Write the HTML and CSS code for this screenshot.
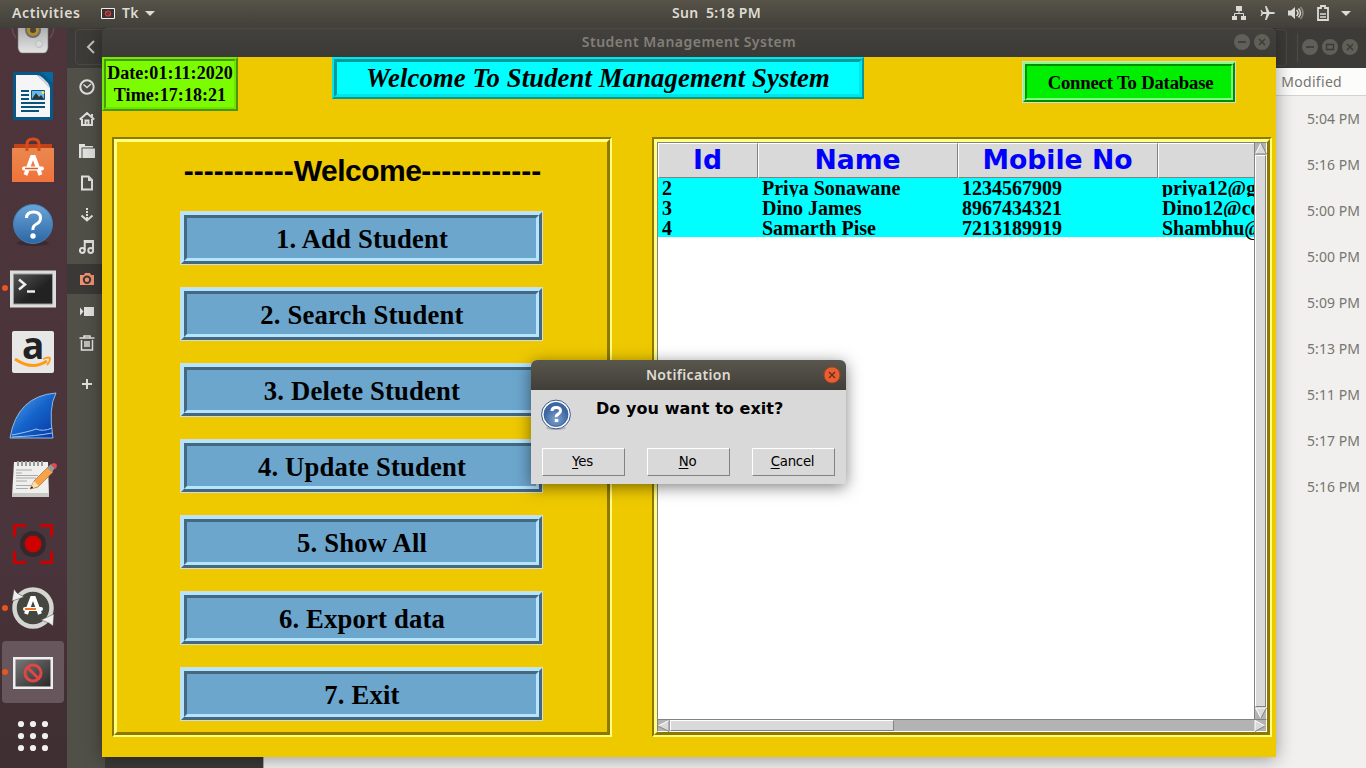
FILE: index.html
```html
<!DOCTYPE html>
<html lang="en">
<head>
<meta charset="utf-8">
<title>Student Management System</title>
<link rel="stylesheet" href="styles.css">
</head>
<body>
<div class="desktop">

  <section class="files">
    <header class="files-bar">
      <div class="back"><svg width="32" height="36" viewBox="0 0 32 36"><path d="M18 11l-6 6 6 6" fill="none" stroke="#c4c2bd" stroke-width="2"/></svg></div>
      <div class="files-right">
        <i class="sep"></i>
        <svg width="60" height="20" viewBox="0 0 60 20"><g fill="#605f58"><circle cx="10" cy="10" r="8"/><circle cx="30" cy="10" r="8"/><circle cx="50" cy="10" r="8"/></g><g fill="none" stroke="#3a3934" stroke-width="1.3"><path d="M6 10h8M26.500 7.500h7v5h-7zM47 7l6 6m0-6l-6 6"/></g></svg>
      </div>
    </header>
    <div class="files-body">
      <nav class="places">
        <div class="place"><svg viewBox="0 0 16 16"><circle cx="8" cy="8" r="6.700"/><path d="M4.500 5.500L8 8.500l4-3.500" stroke-width="1.400"/></svg></div>
        <div class="place"><svg viewBox="0 0 16 16"><path d="M.8 8.500L8 2l7.200 6.500M3 8v6h10V8M6.500 14V9.500h3V14M13 6V3"/></svg></div>
        <div class="place"><svg viewBox="0 0 16 16"><path d="M0 1h6v2h8v1.500H2.500V15H0z" fill="#e0e0de" stroke="none"/><path d="M3.500 5.500H16V15H3.500z" fill="#e0e0de" stroke="none"/></svg></div>
        <div class="place"><svg viewBox="0 0 16 16"><path d="M3 1.500h6.500L13 5v9.500H3z"/><path d="M9 1v5h4z" fill="#e0e0de" stroke="none"/></svg></div>
        <div class="place"><svg viewBox="0 0 16 16"><path d="M8 1v11" stroke-dasharray="2 1"/><path d="M2.500 8.500L8 13.500l5.500-5"/></svg></div>
        <div class="place"><svg viewBox="0 0 16 16"><circle cx="3.300" cy="11.500" r="2.400"/><circle cx="11.700" cy="11.500" r="2.400"/><path d="M5.700 11V2H14v9M6 3h8"/></svg></div>
        <div class="place active"><svg viewBox="0 0 16 16"><path d="M1 4h4l1-2h5l1 2h3v10H1z" fill="#f0906e" stroke="none"/><circle cx="8" cy="8.800" r="3.200" stroke="#3a3935"/></svg></div>
        <div class="place"><svg viewBox="0 0 16 16"><path d="M5 4h10v9H5zM1 4.500l3.500 4L1 12.500z" fill="#e0e0de" stroke="none"/></svg></div>
        <div class="place"><svg viewBox="0 0 16 16"><path d="M.5 3h15M5 2.500V1h6v1.500M2.500 5v10h11V5M6 6v6M8 6v6M10 6v6" stroke-width="1.500"/></svg></div>
        <div class="place add"><svg viewBox="0 0 16 16"><path d="M8 3v10M3 8h10"/></svg></div>
      </nav>
      <div class="tree-pane"></div>
      <div class="listing">
        <div class="list-head">Modified</div>
        <div class="stamp">5:04 PM</div><div class="stamp">5:16 PM</div><div class="stamp">5:00 PM</div>
        <div class="stamp">5:00 PM</div><div class="stamp">5:09 PM</div><div class="stamp">5:13 PM</div>
        <div class="stamp">5:11 PM</div><div class="stamp">5:17 PM</div><div class="stamp">5:16 PM</div>
      </div>
    </div>
  </section>

  <aside class="dock">
    <div class="app speaker"><svg width="66" height="30" viewBox="0 0 66 30"><defs><linearGradient id="sp" x2="0" y2="1"><stop stop-color="#aaa"/><stop offset="1" stop-color="#e4e4e4"/></linearGradient></defs><path d="M12 -2q0 7 4 12M54 -2q0 7-4 12" fill="none" stroke="#5e4c58" stroke-width="1.500"/><path d="M18 -2v22q1 5 4 5h22q3 0 4-5V-2z" fill="url(#sp)" stroke="#777" stroke-width=".6"/><circle cx="33" cy="2" r="8" fill="#6c6c6c"/><circle cx="33" cy="2" r="6" fill="#b28b2d"/><circle cx="33" cy="2" r="3" fill="#4a4437"/><circle cx="39" cy="16" r="3.500" fill="#d8d8d8" stroke="#bbb"/></svg></div>
    <div class="app"><svg viewBox="0 0 48 48"><path d="M6 0h27l11 11v35q0 2-2 2H6q-2 0-2-2V2q0-2 2-2z" fill="#075789"/><path d="M32 0h11q1 0 1 1v10z" fill="#0369a3"/><path d="M7 3h21l13 13v29H7z" fill="#f5f5f5"/><path d="M28 3q3 0 6 3l5 5q2 3 2 6z" fill="#d2d6dd"/><path d="M12 19h8M12 23h8M12 27h8M12 31h24M12 35h24M12 39h18" stroke="#0a527e" stroke-width="2"/><path d="M22.500 18.500h13v9h-13z" fill="#68b8e8" stroke="#075789"/><path d="M23 27l4-6 3 4 2-2 3 4z" fill="#333"/><circle cx="34" cy="20.500" r="1.500" fill="#fd5"/></svg></div>
    <div class="app"><svg viewBox="0 0 48 48"><defs><linearGradient id="bag" x2="0" y2="1"><stop stop-color="#e9884f"/><stop offset="1" stop-color="#f0733b"/></linearGradient></defs><path d="M5 8h38v8H5z" fill="#bf4317"/><path d="M3 12h42v34H3z" fill="url(#bag)"/><path d="M18 15V8q0-5 6-5t6 5v7" fill="none" stroke="#d94c1a" stroke-width="3"/><path d="M16.500 39L23 21h2l6.500 18" fill="none" stroke="#fff" stroke-width="4"/><path d="M15 32.500h18" stroke="#fff" stroke-width="4" stroke-linecap="round"/><path d="M16 32.500h13" stroke="#e65d20" stroke-width="1.500"/></svg></div>
    <div class="app"><svg viewBox="0 0 48 48"><defs><linearGradient id="hp" x2="0" y2="1"><stop stop-color="#69a5d8"/><stop offset="1" stop-color="#2c66a6"/></linearGradient></defs><ellipse cx="24" cy="43" rx="16" ry="3" fill="#3c2a30"/><circle cx="24" cy="24" r="19.500" fill="url(#hp)" stroke="#437fb7"/><path d="M17.500 18q0-6 7-6t7 6q0 4-4 6t-3.500 6" fill="none" stroke="#fff" stroke-width="3"/><circle cx="24" cy="36" r="2.700" fill="#fff"/></svg></div>
    <div class="app running"><svg viewBox="0 0 48 48"><defs><linearGradient id="tm" x2="1" y2="1"><stop stop-color="#555"/><stop offset=".6" stop-color="#222"/></linearGradient></defs><path d="M1 6.500h46v37H1z" fill="#ddd"/><path d="M4.500 10h39v30h-39z" fill="url(#tm)" stroke="#999"/><path d="M10 15.500l6 5-6 5" fill="none" stroke="#eee" stroke-width="2.500"/><path d="M18 27.500h8" stroke="#eee" stroke-width="2.500"/></svg></div>
    <div class="app"><svg viewBox="0 0 48 48"><rect x="3" y="3" width="42" height="42" rx="2" fill="#e7e7e7"/><text x="13" y="31" class="amz">a</text><path d="M6 31q17 12 32 2" fill="none" stroke="#ff9b16" stroke-width="2.800"/><path d="M34 31q7-3 7 0t-3 6" fill="none" stroke="#ff9b16" stroke-width="1.800"/></svg></div>
    <div class="app"><svg viewBox="0 0 48 48"><defs><linearGradient id="fin" x2="1" y2="1"><stop stop-color="#5fa7ec"/><stop offset=".5" stop-color="#1463ca"/><stop offset="1" stop-color="#0735a0"/></linearGradient></defs><path d="M1 46Q8 4 47 1q-8 15-3 45z" fill="url(#fin)" stroke="#8ebaea"/><path d="M3 43q20-4 24-6 7 3 16-1M3 45q25-1 40-4" fill="none" stroke="#9ac6ef"/></svg></div>
    <div class="app"><svg viewBox="0 0 48 48"><path d="M5 6h34l1 34H3z" fill="#efefed"/><path d="M3 37h37v4H3z" fill="#c8c9c2"/><g stroke="#aaa"><path d="M7 14h16M7 17h6M7 19.500h22M7 22h20M7 25h11M7 29.500h22M7 32.500h12"/></g><path d="M9 10V5m4 5V5m4 5V5m4 5V5m4 5V5m4 5V5m4 5V5" stroke="#999" stroke-width="2"/><path d="M21 33l4-8L39 11l5 5-15 15z" fill="#f6a447" stroke="#aa682d" stroke-width=".7"/><path d="M38 12l4-4 4 4-3 4z" fill="#999"/><path d="M42 9q3-4 6 0l-1 4z" fill="#e54a4a"/><path d="M21 33l4-8 5 5z" fill="#f5dfb4"/><path d="M21 33l2-3 1 2z" fill="#111"/></svg></div>
    <div class="app"><svg viewBox="0 0 48 48"><circle cx="24" cy="24" r="13" fill="#33292d"/><circle cx="24" cy="24" r="8.500" fill="#cf0000"/><path d="M17 5.500H5.500V17M31 5.500h11.500V17M17 42.500H5.500V31M42.500 31v11.500H31" fill="none" stroke="#cb0000" stroke-width="3"/></svg></div>
    <div class="app running"><svg viewBox="0 0 48 48"><circle cx="24" cy="24" r="18.500" fill="#45463f" stroke="#d5d5d2" stroke-width="4.500"/><path d="M3 17L5 5l3 4 7 4zM45 30l-1 12-4-3-8-3z" fill="#eee" stroke="#45463f" stroke-width=".5"/><path d="M17 30l6-16h2l6 16" fill="none" stroke="#fff" stroke-width="4"/><path d="M16 25h16" stroke="#fff" stroke-width="4" stroke-linecap="round"/><path d="M16 25h11" stroke="#f47421" stroke-width="2"/></svg></div>
    <div class="app running selected"><svg viewBox="0 0 48 48"><defs><linearGradient id="tk" x2="1" y2="1"><stop stop-color="#777"/><stop offset="1" stop-color="#292929"/></linearGradient></defs><path d="M4 9h40v32H4z" fill="#eee"/><path d="M6.500 11.500h35v27h-35z" fill="url(#tk)"/><circle cx="24" cy="25" r="8" fill="none" stroke="#df4745" stroke-width="3"/><path d="M18 19l12 12" stroke="#df4745" stroke-width="3"/></svg></div>
    <div class="app grid"><svg viewBox="0 0 48 48"><g fill="#f0f0f0"><circle cx="12" cy="12" r="3.100"/><circle cx="24" cy="12" r="3.100"/><circle cx="36" cy="12" r="3.100"/><circle cx="12" cy="24" r="3.100"/><circle cx="24" cy="24" r="3.100"/><circle cx="36" cy="24" r="3.100"/><circle cx="12" cy="36" r="3.100"/><circle cx="24" cy="36" r="3.100"/><circle cx="36" cy="36" r="3.100"/></g></svg></div>
  </aside>

  <main class="window">
    <header class="window-bar"><span>Student Management System</span>
      <svg width="40" height="20" viewBox="0 0 40 20"><g fill="#605f58"><circle cx="10" cy="10" r="8"/><circle cx="30" cy="10" r="8"/></g><path d="M6 10h8M27 7l6 6m0-6l-6 6" fill="none" stroke="#3a3934" stroke-width="1.300"/></svg>
    </header>
    <div class="canvas">
      <div class="top">
        <div class="bevel clock"><div class="face">Date:01:11:2020<br>Time:17:18:21</div></div>
        <div class="bevel banner"><div class="face"><span>Welcome To Student Management System</span></div></div>
        <button class="bevel connect"><span class="face">Connect To Database</span></button>
      </div>
      <div class="panels">
        <section class="frame"><div class="frame-in menu">
          <h1>-----------<span>Welcome</span>------------</h1>
          <button class="bevel choice"><span class="face">1. Add Student</span></button>
          <button class="bevel choice"><span class="face">2. Search Student</span></button>
          <button class="bevel choice"><span class="face">3. Delete Student</span></button>
          <button class="bevel choice"><span class="face">4. Update Student</span></button>
          <button class="bevel choice"><span class="face">5. Show All</span></button>
          <button class="bevel choice"><span class="face">6. Export data</span></button>
          <button class="bevel choice"><span class="face">7. Exit</span></button>
        </div></section>
        <section class="frame wide"><div class="frame-in data">
          <div class="sheet">
            <div class="row head"><div>Id</div><div>Name</div><div>Mobile No</div><div></div></div>
            <div class="row"><div>2</div><div>Priya Sonawane</div><div>1234567909</div><div>priya12@gmail</div></div>
            <div class="row"><div>3</div><div>Dino James</div><div>8967434321</div><div>Dino12@com</div></div>
            <div class="row last"><div>4</div><div>Samarth Pise</div><div>7213189919</div><div>Shambhu@g</div></div>
          </div>
          <div class="vbar"><svg width="12" height="12" viewBox="0 0 12 12"><path d="M6 0L.5 11h11z" fill="#d9d9d9"/><path d="M6 0L.5 11" stroke="#fff"/><path d="M6 0l5.500 11H.5" fill="none" stroke="#828282"/></svg><i class="thumb"></i><svg width="12" height="12" viewBox="0 0 12 12"><path d="M.5 1h11L6 11z" fill="#d9d9d9"/><path d="M6 11L.5 1h11" fill="none" stroke="#fff"/><path d="M11.500 1L6 11" stroke="#828282"/></svg></div>
          <div class="hbar"><svg width="12" height="12" viewBox="0 0 12 12"><path d="M0 6L11 .5v11z" fill="#d9d9d9"/><path d="M0 6L11 .5" stroke="#fff"/><path d="M11 .5v11L0 6" fill="none" stroke="#828282"/></svg><i class="thumb"></i><svg class="end" width="12" height="12" viewBox="0 0 12 12"><path d="M1 .5v11L11 6z" fill="#d9d9d9"/><path d="M1 11.500V.5L11 6" fill="none" stroke="#fff"/><path d="M11 6L1 11.500" stroke="#828282"/></svg></div>
        </div></section>
      </div>
    </div>
  </main>

  <section class="dialog">
    <header class="dialog-bar"><span>Notification</span><svg width="18" height="18" viewBox="0 0 18 18"><circle cx="9" cy="9" r="8" fill="#eb5e31" stroke="#a9421f"/><path d="M6 6l6 6m0-6l-6 6" stroke="#57301f" stroke-width="1.300"/></svg></header>
    <div class="message">
      <svg width="32" height="32" viewBox="0 0 32 32"><defs><radialGradient id="qg" cy=".7"><stop stop-color="#80a4cf"/><stop offset="1" stop-color="#3e66a3"/></radialGradient></defs><ellipse cx="16" cy="29" rx="10" ry="2" fill="#b5b5b5"/><circle cx="16" cy="15.500" r="14.400" fill="#fff" stroke="#34598f"/><circle cx="16" cy="15.500" r="12" fill="url(#qg)" stroke="#34598f" stroke-width=".8"/><path d="M12 12q0-3.500 4.300-3.500t4.200 3.300q0 2-2.300 3.300t-1.700 3" fill="none" stroke="#fff" stroke-width="3"/><path d="M14.800 20h3.500v3h-3.500z" fill="#fff"/></svg>
      <strong>Do you want to exit?</strong>
    </div>
    <div class="answers"><button><u>Y</u>es</button><button><u>N</u>o</button><button><u>C</u>ancel</button></div>
  </section>

  <header class="panel">
    <span class="activities">Activities</span>
    <svg class="tk-mini" width="14" height="11" viewBox="0 0 14 11"><path d="M.5.5h13v10H.5z" fill="#353535" stroke="#eee"/><circle cx="7" cy="5.500" r="2.500" fill="none" stroke="#e63b3b" stroke-width="1.200"/><path d="M5 3.500l4 4" stroke="#e63b3b"/></svg>
    <span class="tk-name">Tk</span><i class="down"></i>
    <span class="now">Sun&nbsp; 5:18 PM</span>
    <div class="tray">
      <svg width="16" height="16" viewBox="0 0 16 16"><path d="M5 1h6v5H5zM1 11h5v4H1zM10 11h5v4h-5z" fill="#dcdad5"/><path d="M8 5v4M3.500 12V8.500h9V12" fill="none" stroke="#dcdad5"/></svg>
      <svg width="16" height="16" viewBox="0 0 16 16"><path d="M15 8q0 1-2 1H9.500L6.500 15H5l1.500-6H3l-1.500 2H.5L1.500 8 .5 5h1L3 7h3.500L5 1h1.500l3 6H13q2 0 2 1z" fill="#dcdad5"/></svg>
      <svg width="16" height="16" viewBox="0 0 16 16"><path d="M0 5.500h3L7 2v12l-4-3.500H0z" fill="#dcdad5"/><path d="M8.500 5q3 3 0 6M10.500 3.500q4 4.500 0 9" fill="none" stroke="#dcdad5" stroke-width="1.500"/><path d="M12.500 2q5 6 0 12" fill="none" stroke="#8b8981" stroke-width="1.500"/></svg>
      <svg width="14" height="16" viewBox="0 0 14 16"><path d="M5 1h4v2h3v12H2V3h3z" fill="none" stroke="#dcdad5" stroke-width="1.800"/><path d="M4 9h6M4 12h6" stroke="#dcdad5" stroke-width="1.600"/></svg>
      <i class="down"></i>
    </div>
  </header>
</div>
</body>
</html>
```
FILE: styles.css
```css
* { box-sizing: border-box; }
body { margin: 0; overflow: hidden; }
button { font: inherit; color: inherit; padding: 0; background: none; border: 0; display: block; }
svg { display: block; flex: none; }
.desktop { position: relative; width: 1366px; height: 768px; overflow: hidden; background: #48353b; font-family: "Noto Sans", sans-serif; }

/* Top panel */
.panel { position: absolute; left: 0; top: 0; width: 1366px; height: 28px; padding: 0 15px 2px 12px; display: flex; align-items: center; background: linear-gradient(#575349, #403f39); color: #dfdbd2; font: 600 14px/26px "Noto Sans", sans-serif; }
.activities { width: 89px; letter-spacing: .6px; }
.tk-name { padding: 0 6px 0 7px; letter-spacing: .4px; }
.down { width: 0; height: 0; border: 5px solid transparent; border-top-color: #dfdbd2; border-bottom: 0; }
.now { position: absolute; left: 672px; top: 0; letter-spacing: .25px; white-space: nowrap; }
.tray { margin-left: auto; display: flex; align-items: center; gap: 12px; }
.tray > svg:first-child { margin-right: 1px; }
.tray .down { margin-left: -1px; }

/* Launcher */
.dock { position: absolute; left: 0; top: 28px; width: 67px; height: 740px; background: linear-gradient(#4e343b, #49353b 70%, #432f34 88%, #3e2f32); }
.app { position: relative; width: 66px; height: 64px; display: flex; align-items: center; justify-content: center; }
.app > svg { width: 48px; height: 48px; }
.speaker { height: 36px; align-items: flex-start; }
.speaker > svg { width: 66px; height: 30px; }
.running::before { content: ""; position: absolute; left: 2px; top: 29px; width: 6px; height: 6px; border-radius: 50%; background: #e9541f; }
.selected { z-index: 0; }
.selected::after { content: ""; position: absolute; z-index: -1; left: 2px; top: 1px; width: 62px; height: 62px; border-radius: 4px; background: #67575c; }
.amz { font: bold 37px "Open Sans", sans-serif; fill: #222; }

/* File browser */
.files { position: absolute; left: 67px; top: 28px; width: 1299px; height: 740px; background: #f1f0ee; }
.files-bar { height: 40px; display: flex; justify-content: space-between; background: #3c3b37; }
.back { width: 40px; height: 36px; margin: 1px 0 0 8px; border: 1px solid #4a4944; border-radius: 4px; }
.files-right { display: flex; align-items: center; width: 90px; height: 38px; padding-left: 10px; }
.files-right::before { content: ""; width: 10px; height: 35px; border: 1px solid #4a4944; border-left: 0; border-radius: 0 4px 4px 0; margin-left: -10px; }
.sep { width: 1px; height: 29px; background: #4c4b45; margin: 0 2px 0 10px; }
.files-body { display: flex; height: 700px; }
.places { width: 38px; padding-top: 3px; background: #505048; }
.place { height: 32px; display: flex; align-items: center; padding-left: 12px; }
.place svg { width: 16px; height: 16px; fill: none; stroke: #e0e0de; stroke-width: 2; }
.place.active { height: 30px; margin: 1px 0; background: #3a3935; }
.place.add { margin-top: 9px; }
.tree-pane { width: 159px; background: #3b3a36; border-right: 1px solid #aaa; }
.listing { flex: 1; color: #77756f; font-size: 14px; text-align: right; }
.list-head { height: 28px; line-height: 27px; padding-right: 24px; letter-spacing: .3px; background: #fcfcfb; border-bottom: 1px solid #d5d3d0; }
.stamp { height: 46px; line-height: 46px; padding-right: 6px; letter-spacing: .05px; }

/* Main window */
.window { position: absolute; left: 102px; top: 28px; width: 1174px; height: 729px; border-radius: 6px 6px 0 0; box-shadow: 0 2px 18px rgba(0,0,0,.38); }
.window-bar { position: relative; height: 29px; padding-bottom: 3px; border-radius: 6px 6px 0 0; background: linear-gradient(#42413d, #3b3a36); border-top: 1px solid #4a4944; display: flex; align-items: center; justify-content: center; color: #827f78; font-size: 14px; font-weight: 600; letter-spacing: .48px; }
.window-bar svg { position: absolute; right: 4px; top: 3px; }
.canvas { height: 700px; background: #eec900; }
.bevel { border: 2px solid; font-family: "Liberation Serif", serif; font-weight: bold; color: #000; }
.face { display: flex; align-items: center; justify-content: center; width: 100%; height: 100%; border: 2px solid; color: inherit; white-space: nowrap; }
.top { height: 80px; display: flex; align-items: flex-start; }
.clock { width: 136px; height: 54px; border-color: #74e80b #4a9800 #4a9800 #74e80b; font-size: 18px; line-height: 22px; letter-spacing: .05px; text-align: center; }
.clock .face { background: #7cfc00; border-color: #4a9800 #70e600 #70e600 #4a9800; display: block; padding-top: 1px; }
.banner { width: 532px; height: 42px; margin-left: 94px; border-color: #00e5ee #00999c #00999c #00e5ee; font-size: 26.670px; font-style: italic; letter-spacing: .13px; }
.banner .face { border-width: 3px; border-color: #00999c #00e5e8 #00e5e8 #00999c; background: #0ff; }
.connect { width: 212px; height: 40px; margin: 5px 0 0 159px; box-shadow: 0 0 0 1px #d9d9d9; border-color: #80ff80 #008f00 #008f00 #80ff80; font-size: 18.670px; letter-spacing: -.17px; }
.connect .face { padding: 1px 0 0 3px; background: #00ee00; border-color: #008f00 #80ff80 #80ff80 #008f00; }
.panels { display: flex; gap: 40px; padding-left: 10px; }
.frame { width: 500px; height: 600px; border: 2px solid; border-color: #8e7800 #ffff80 #ffff80 #8e7800; }
.frame.wide { width: 620px; }
.frame-in { height: 100%; border: 3px solid; border-color: #ffff80 #8e7800 #8e7800 #ffff80; }
.menu { display: flex; flex-direction: column; align-items: center; gap: 24px; }
.menu h1 { font: bold 30px/34px "Liberation Sans", sans-serif; margin: 12px 0 0; padding-left: 1px; white-space: nowrap; }
.menu h1 span { letter-spacing: -.5px; }
.choice { width: 361px; height: 52px; flex: none; border-width: 3px; border-color: #b4e5ff #45677f #45677f #b4e5ff; box-shadow: 0 0 0 1px #d0dce0; font-size: 26.670px; letter-spacing: .18px; margin-right: 1px; }
.choice .face { padding: 2px 0 0 1px; border-width: 3px; background: #6ca6cd; border-color: #45677f #b4e5ff #b4e5ff #45677f; }

/* Records table */
.data { display: grid; grid-template: 577px 13px / 597px 13px; background: #fff; }
.sheet { overflow: hidden; border: 1px solid #828282; border-right: 0; border-bottom: 0; }
.row { width: 700px; height: 20px; display: grid; grid-template-columns: 100px 200px 200px 200px; background: #0ff; font: bold 20px/22px "Liberation Serif", serif; }
.row div { padding-left: 4px; height: 20px; overflow: hidden; white-space: nowrap; }
.row.last div { overflow: visible; }
.row.head { height: 35px; margin-bottom: -1px; background: #d9d9d9; color: #00f; font: bold 26.670px/32px "DejaVu Sans", sans-serif; text-align: center; }
.row.head div { height: 35px; padding: 0 1px 0 0; border: 1px solid; border-color: #fff #828282 #828282 #fff; }
.thumb { display: block; background: #d9d9d9; border: 1px solid; border-color: #fff #828282 #828282 #fff; }
.vbar, .hbar { background: #b3b3b3; display: flex; }
.vbar { flex-direction: column; border: 1px solid #828282; border-right-color: #fff; border-bottom: 0; }
.vbar .thumb { flex: 1; }
.hbar { grid-column: 1 / 3; border: 1px solid; border-color: #828282 #fff #fff #828282; }
.hbar .thumb { width: 224px; height: 11px; }
.hbar .end { margin-left: auto; }

/* Confirmation dialog */
.dialog { position: absolute; left: 531px; top: 360px; width: 315px; height: 124px; border-radius: 6px 6px 0 0; background: #d9d9d9; box-shadow: 0 3px 16px rgba(0,0,0,.5); }
.dialog-bar { position: relative; height: 30px; padding-bottom: 1px; border-radius: 6px 6px 0 0; background: linear-gradient(#59564d, #403e38); display: flex; align-items: center; justify-content: center; font-size: 14px; font-weight: 600; letter-spacing: .35px; color: #dfdbd2; }
.dialog-bar svg { position: absolute; right: 5px; top: 6px; }
.message { height: 57px; display: flex; padding: 9px 0 0 9px; gap: 24px; }
.message strong { font: bold 16px/19px "DejaVu Sans", sans-serif; letter-spacing: .06px; }
.answers { display: flex; gap: 22px; padding: 1px 0 0 11px; font: 13.330px/26px "DejaVu Sans", sans-serif; letter-spacing: -.25px; }
.answers button { width: 83px; height: 28px; padding-right: 2px; border: 1px solid; border-color: #fff #828282 #828282 #fff; text-align: center; color: #000; letter-spacing: inherit; }
.answers u { text-underline-offset: 2px; }
```
